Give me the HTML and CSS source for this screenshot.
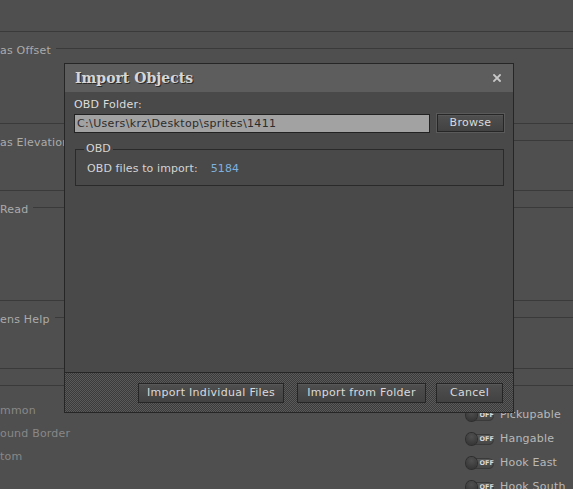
FILE: index.html
```html
<!DOCTYPE html>
<html>
<head>
<meta charset="utf-8">
<link rel="stylesheet" href="styles.css">
</head>
<body>
<div class="page">
  <div class="top"></div>
  <div class="band"></div>
  <div class="group g1"><div class="legend"><span>as Offset</span><i></i></div></div>
  <div class="band"></div>
  <div class="group g2"><div class="legend"><span>as Elevation</span><i></i></div></div>
  <div class="band"></div>
  <div class="group g3"><div class="legend"><span>Read</span><i></i></div></div>
  <div class="band"></div>
  <div class="group g4"><div class="legend"><span>ens Help</span><i></i></div></div>
  <div class="band"></div>
  <div class="group g5">
    <div class="legend"><i></i></div>
    <div class="cols">
      <ul class="left-list">
        <li>mmon</li>
        <li>ound Border</li>
        <li>tom</li>
      </ul>
      <ul class="right-list">
        <li><span class="toggle"><span class="knob"></span><span class="off">OFF</span></span>Pickupable</li>
        <li><span class="toggle"><span class="knob"></span><span class="off">OFF</span></span>Hangable</li>
        <li><span class="toggle"><span class="knob"></span><span class="off">OFF</span></span>Hook East</li>
        <li><span class="toggle"><span class="knob"></span><span class="off">OFF</span></span>Hook South</li>
      </ul>
    </div>
  </div>
</div>

<div class="dialog">
  <div class="titlebar">
    <span class="title">Import Objects</span>
    <svg class="close" width="8" height="8" viewBox="0 0 8 8"><path d="M1 1 L7 7 M7 1 L1 7" stroke="#c8c8c8" stroke-width="1.8" stroke-linecap="square"/></svg>
  </div>
  <div class="body">
    <div class="label">OBD Folder:</div>
    <div class="row">
      <div class="input">C:\Users\krz\Desktop\sprites\1411</div>
      <button class="btn browse">Browse</button>
    </div>
    <fieldset class="box">
      <legend>OBD</legend>
      <div class="info">OBD files to import:<span class="num">5184</span></div>
    </fieldset>
  </div>
  <div class="footer">
    <button class="btn b1">Import Individual Files</button>
    <button class="btn b2">Import from Folder</button>
    <button class="btn b3">Cancel</button>
  </div>
</div>
</body>
</html>
```

FILE: styles.css
```css
html, body {
  margin: 0;
  padding: 0;
  background: #4f4f4f;
  width: 573px;
  height: 489px;
  overflow: hidden;
}
body {
  font-family: "DejaVu Sans", Verdana, sans-serif;
  font-size: 11px;
  color: #d8d8d8;
  position: relative;
}
.page {
  display: flex;
  flex-direction: column;
}
.top { height: 31px; }
.band {
  height: 10px;
  border-top: 1px solid #3a3a3a;
}
.legend {
  display: flex;
  height: 16px;
  line-height: 18px;
  color: #ababab;
  letter-spacing: 0.2px;
}
.legend span {
  padding-right: 5px;
  white-space: nowrap;
}
.legend i {
  flex: 1;
  height: 1px;
  background: #3a3a3a;
  margin-top: 6px;
}
.g1 { height: 81px; }
.g2 { height: 56px; }
.g3 { height: 99px; }
.g4 { height: 57px; }
.g5 { flex: 1; }

.cols {
  display: grid;
  grid-template-columns: 466px 1fr;
}
ul { list-style: none; margin: 0; padding: 0; }
.left-list {
  padding-top: 4px;
  line-height: 23px;
  color: #888;
  letter-spacing: 0.2px;
}
.right-list {
  padding-top: 8px;
  line-height: 24px;
  color: #b8b8b8;
  letter-spacing: 0.2px;
}
.right-list li {
  display: flex;
  align-items: center;
  white-space: nowrap;
}
.toggle {
  display: flex;
  align-items: center;
  width: 28px;
  height: 11px;
  border-radius: 6px;
  background: linear-gradient(#5a5a5a, #444);
  box-shadow: inset 0 0 0 1px #3a3a3a;
  margin-right: 6px;
}
.knob {
  width: 12px;
  height: 12px;
  border-radius: 50%;
  background: radial-gradient(circle at 50% 30%, #505050, #303030);
  box-shadow: 0 0 0 1px #2e2e2e;
}
.off {
  font-size: 6.5px;
  font-weight: bold;
  letter-spacing: 0;
  color: #d8d8d8;
  line-height: 11px;
  margin-left: 3px;
}

.dialog {
  position: absolute;
  left: 64px;
  top: 63px;
  width: 450px;
  height: 350px;
  box-sizing: border-box;
  border: 1px solid #262626;
  display: flex;
  flex-direction: column;
  background: #494949;
}
.titlebar {
  height: 28px;
  flex: none;
  background: #5d5d5d;
  display: flex;
  align-items: center;
  justify-content: space-between;
  padding: 0 12px 0 10px;
}
.title {
  font-family: "DejaVu Serif", "Liberation Serif", serif;
  font-weight: bold;
  font-size: 14px;
  color: #d6d6d6;
  text-shadow: 1px 1px 0 #2c2c2c;
}
.close { display: block; }
.body {
  flex: 1;
  padding: 6px 9px 0 9px;
  display: flex;
  flex-direction: column;
}
.label {
  line-height: 14px;
  color: #dcdcdc;
  letter-spacing: 0.2px;
}
.row {
  display: flex;
  align-items: center;
  gap: 7px;
  margin-top: 1px;
  height: 20px;
}
.input {
  flex: 1;
  height: 19px;
  box-sizing: border-box;
  border: 1px solid #222;
  background: #a2a2a2;
  color: #2c2c2c;
  line-height: 17px;
  padding-left: 2px;
  letter-spacing: 0.35px;
  white-space: nowrap;
}
.btn {
  font: inherit;
  color: #dadada;
  background: linear-gradient(#4f4f4f, #424242);
  border: 1px solid #262626;
  box-shadow: 0 0 0 1px #5a5a5a, inset 0 1px 0 #575757;
  padding: 0;
  margin: 0;
  text-align: center;
  height: 18px;
  line-height: 16px;
  box-sizing: border-box;
  letter-spacing: 0.3px;
}
.browse { width: 67px; }
.box {
  margin: 9px 0 0 1px;
  border: 1px solid #2a2a2a;
  padding: 0 8px 9px 8px;
}
.box legend {
  padding: 0 2px;
  line-height: 14px;
  color: #d4d4d4;
}
.info {
  margin-top: 6px;
  padding-left: 3px;
  line-height: 14px;
  color: #d4d4d4;
  letter-spacing: 0.1px;
}
.num {
  color: #7fb1de;
  margin-left: 13px;
}
.footer {
  height: 39px;
  flex: none;
  border-top: 1px solid #262626;
  background: repeating-conic-gradient(#3b3b3b 0 25%, #5a5a5a 0 50%) 0 0 / 2px 2px;
  display: flex;
  align-items: center;
  justify-content: flex-end;
  padding-right: 10px;
}
.footer .btn {
  height: 20px;
  line-height: 18px;
  box-shadow: inset 0 1px 0 #585858;
}
.b1 { width: 146px; }
.b2 { width: 129px; margin-left: 13px; }
.b3 { width: 67px; margin-left: 10px; }
```
